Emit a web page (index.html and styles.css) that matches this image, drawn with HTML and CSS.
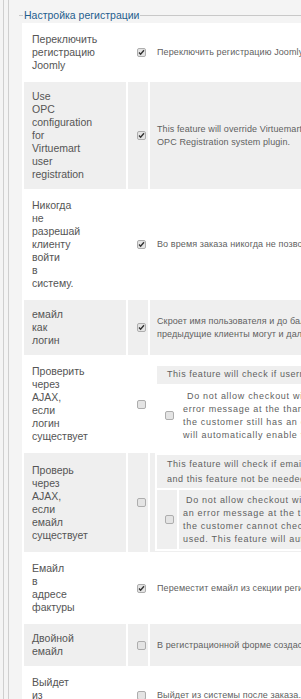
FILE: index.html
```
<!DOCTYPE html>
<html lang="ru">
<head>
<meta charset="utf-8">
<title>Настройка регистрации</title>
<link rel="stylesheet" href="styles.css">
</head>
<body>
<div class="frame">
  <div class="inner">
    <fieldset class="fs">
      <legend class="legend">Настройка регистрации</legend>
      <table class="cfg">
        <tr class="row">
          <td class="lbl"><div class="words">Переключить регистрацию Joomly</div></td>
          <td class="chk"><svg class="cb" viewBox="0 0 9 9" width="9" height="9"><rect x="0.5" y="0.5" width="8" height="8" rx="1.5" class="cb-box"/><path d="M2 4.6 L3.6 6.3 L7 2.2" class="cb-tick"/></svg></td>
          <td class="desc">Переключить регистрацию Joomly</td>
        </tr>
        <tr class="row alt">
          <td class="lbl"><div class="words">Use OPC configuration for Virtuemart user registration</div></td>
          <td class="chk"><svg class="cb" viewBox="0 0 9 9" width="9" height="9"><rect x="0.5" y="0.5" width="8" height="8" rx="1.5" class="cb-box"/><path d="M2 4.6 L3.6 6.3 L7 2.2" class="cb-tick"/></svg></td>
          <td class="desc">This feature will override Virtuemart's registration and will use the settings of the<br>OPC Registration system plugin.</td>
        </tr>
        <tr class="row">
          <td class="lbl"><div class="words">Никогда не разрешай клиенту войти в систему.</div></td>
          <td class="chk"><svg class="cb" viewBox="0 0 9 9" width="9" height="9"><rect x="0.5" y="0.5" width="8" height="8" rx="1.5" class="cb-box"/><path d="M2 4.6 L3.6 6.3 L7 2.2" class="cb-tick"/></svg></td>
          <td class="desc">Во время заказа никогда не позволять клиенту войти в систему.</td>
        </tr>
        <tr class="row alt">
          <td class="lbl"><div class="words">емайл как логин</div></td>
          <td class="chk"><svg class="cb" viewBox="0 0 9 9" width="9" height="9"><rect x="0.5" y="0.5" width="8" height="8" rx="1.5" class="cb-box"/><path d="M2 4.6 L3.6 6.3 L7 2.2" class="cb-tick"/></svg></td>
          <td class="desc">Скроет имя пользователя и до баланса будет использоваться емайл как логин,<br>предыдущие клиенты могут и далее использовать старые логины.</td>
        </tr>
        <tr class="row">
          <td class="lbl"><div class="words">Проверить через AJAX, если логин существует</div></td>
          <td class="chk"><svg class="cb" viewBox="0 0 9 9" width="9" height="9"><rect x="0.5" y="0.5" width="8" height="8" rx="1.5" class="cb-box"/></svg></td>
          <td class="desc nest nest-a">
            <table class="sub">
              <tr><td class="sub-head" colspan="2">This feature will check if username already exists in the database</td></tr>
              <tr>
                <td class="sub-chk"><svg class="cb" viewBox="0 0 9 9" width="9" height="9"><rect x="0.5" y="0.5" width="8" height="8" rx="1.5" class="cb-box"/></svg></td>
                <td class="sub-text sub-text-a">Do not allow checkout with an existing username, the customer will get an<br>error message at the thank you page if the username already exists and<br>the customer still has an option to log in with the existing account. This<br>will automatically enable the username check in the registration form.</td>
              </tr>
            </table>
          </td>
        </tr>
        <tr class="row alt">
          <td class="lbl"><div class="words">Проверь через AJAX, если емайл существует</div></td>
          <td class="chk"><svg class="cb" viewBox="0 0 9 9" width="9" height="9"><rect x="0.5" y="0.5" width="8" height="8" rx="1.5" class="cb-box"/></svg></td>
          <td class="desc nest nest-b">
            <table class="sub">
              <tr><td class="sub-head sub-head-b" colspan="2">This feature will check if email already exists in the database and will show a warning<br>and this feature not be needed when email is used as the username of the customer</td></tr>
              <tr>
                <td class="sub-chk"><svg class="cb" viewBox="0 0 9 9" width="9" height="9"><rect x="0.5" y="0.5" width="8" height="8" rx="1.5" class="cb-box"/></svg></td>
                <td class="sub-text sub-text-b">Do not allow checkout with an existing email address, the customer will get<br>an error message at the thank you page if the email address already exists,<br>the customer cannot check out with an email address which was already<br>used. This feature will automatically enable the email check above.</td>
              </tr>
            </table>
          </td>
        </tr>
        <tr class="row">
          <td class="lbl"><div class="words">Емайл в адресе фактуры</div></td>
          <td class="chk"><svg class="cb" viewBox="0 0 9 9" width="9" height="9"><rect x="0.5" y="0.5" width="8" height="8" rx="1.5" class="cb-box"/><path d="M2 4.6 L3.6 6.3 L7 2.2" class="cb-tick"/></svg></td>
          <td class="desc">Переместит емайл из секции регистрации в секцию адреса фактуры.</td>
        </tr>
        <tr class="row alt">
          <td class="lbl"><div class="words">Двойной емайл</div></td>
          <td class="chk"><svg class="cb" viewBox="0 0 9 9" width="9" height="9"><rect x="0.5" y="0.5" width="8" height="8" rx="1.5" class="cb-box"/></svg></td>
          <td class="desc">В регистрационной форме создаст поле для повторного ввода емайла.</td>
        </tr>
        <tr class="row">
          <td class="lbl"><div class="words">Выйдет из системы</div></td>
          <td class="chk"><svg class="cb" viewBox="0 0 9 9" width="9" height="9"><rect x="0.5" y="0.5" width="8" height="8" rx="1.5" class="cb-box"/></svg></td>
          <td class="desc">Выйдет из системы после заказа.</td>
        </tr>
      </table>
    </fieldset>
  </div>
</div>
</body>
</html>
```
FILE: styles.css
```
html, body {
  margin: 0;
  padding: 0;
  overflow: hidden;
  background: #f4f4f4;
}
body {
  font-family: "Liberation Sans", Arial, sans-serif;
  color: #5a5a5a;
}
.frame {
  margin-left: 3px;
  border-left: 1px solid #cfcfcf;
  padding-left: 4px;
  min-height: 699px;
}
.inner {
  border-left: 1px solid #cfcfcf;
  padding-left: 10px;
  padding-top: 9px;
  min-height: 690px;
}
.fs {
  margin: 0;
  padding: 0 0 0 3px;
  border: 0;
  border-top: 1px solid #c8c8c8;
  min-width: 0;
  width: 700px;
}
.legend {
  padding: 0 1px;
  margin-left: 1px;
  font-size: 10.5px;
  line-height: 12px;
  color: #1f5e8e;
}
.cfg {
  border-collapse: separate;
  border-spacing: 2px;
  background: #fff;
  width: 640px;
  margin-top: 2px;
}
.row > td {
  background: #fff;
  vertical-align: middle;
}
.row.alt > td {
  background: #efefef;
}
.lbl {
  width: 94px;
  padding: 8px 0 8px 8px;
  font-size: 10.5px;
  line-height: 13px;
  color: #555;
}
.words {
  width: 1px;
}
.chk {
  width: 20px;
  padding: 0;
}
.cb {
  display: block;
  margin-left: 9px;
}
.cb-box {
  fill: #e4e4e4;
  stroke: #adadad;
  stroke-width: 1;
}
.cb-tick {
  fill: none;
  stroke: #333;
  stroke-width: 1.4;
}
.desc {
  padding: 8px 6px 8px 7px;
  font-size: 9px;
  line-height: 13px;
  letter-spacing: 0.1px;
  color: #5f5f5f;
  white-space: nowrap;
}
.desc.nest {
  padding-left: 5px;
  padding-right: 0;
}
.nest-a {
  padding-top: 6px;
  padding-bottom: 4px;
}
.nest-b {
  padding-top: 0;
  padding-bottom: 1px;
}
.sub {
  border-collapse: separate;
  border-spacing: 2px;
  background: #fff;
}
.sub td {
  font-size: 9px;
  white-space: nowrap;
  text-align: left;
}
.sub-head {
  background: #efefef;
  line-height: 15px;
  letter-spacing: 0.55px;
  padding: 1px 4px 2px 10px;
}
.sub-head-b {
  padding: 2px 4px 1px 10px;
}
.sub-chk {
  width: 20px;
  padding: 0;
}
.sub-chk .cb {
  margin-left: 8px;
}
.sub-text {
  line-height: 13px;
  letter-spacing: 0.7px;
  padding: 4px 4px 3px 4px;
}
.sub-text-a {
  text-indent: 4px;
}
.sub-text-b {
  text-indent: 3px;
}
.alt .sub-head,
.alt .sub-chk,
.alt .sub-text {
  background: #efefef;
}
```
